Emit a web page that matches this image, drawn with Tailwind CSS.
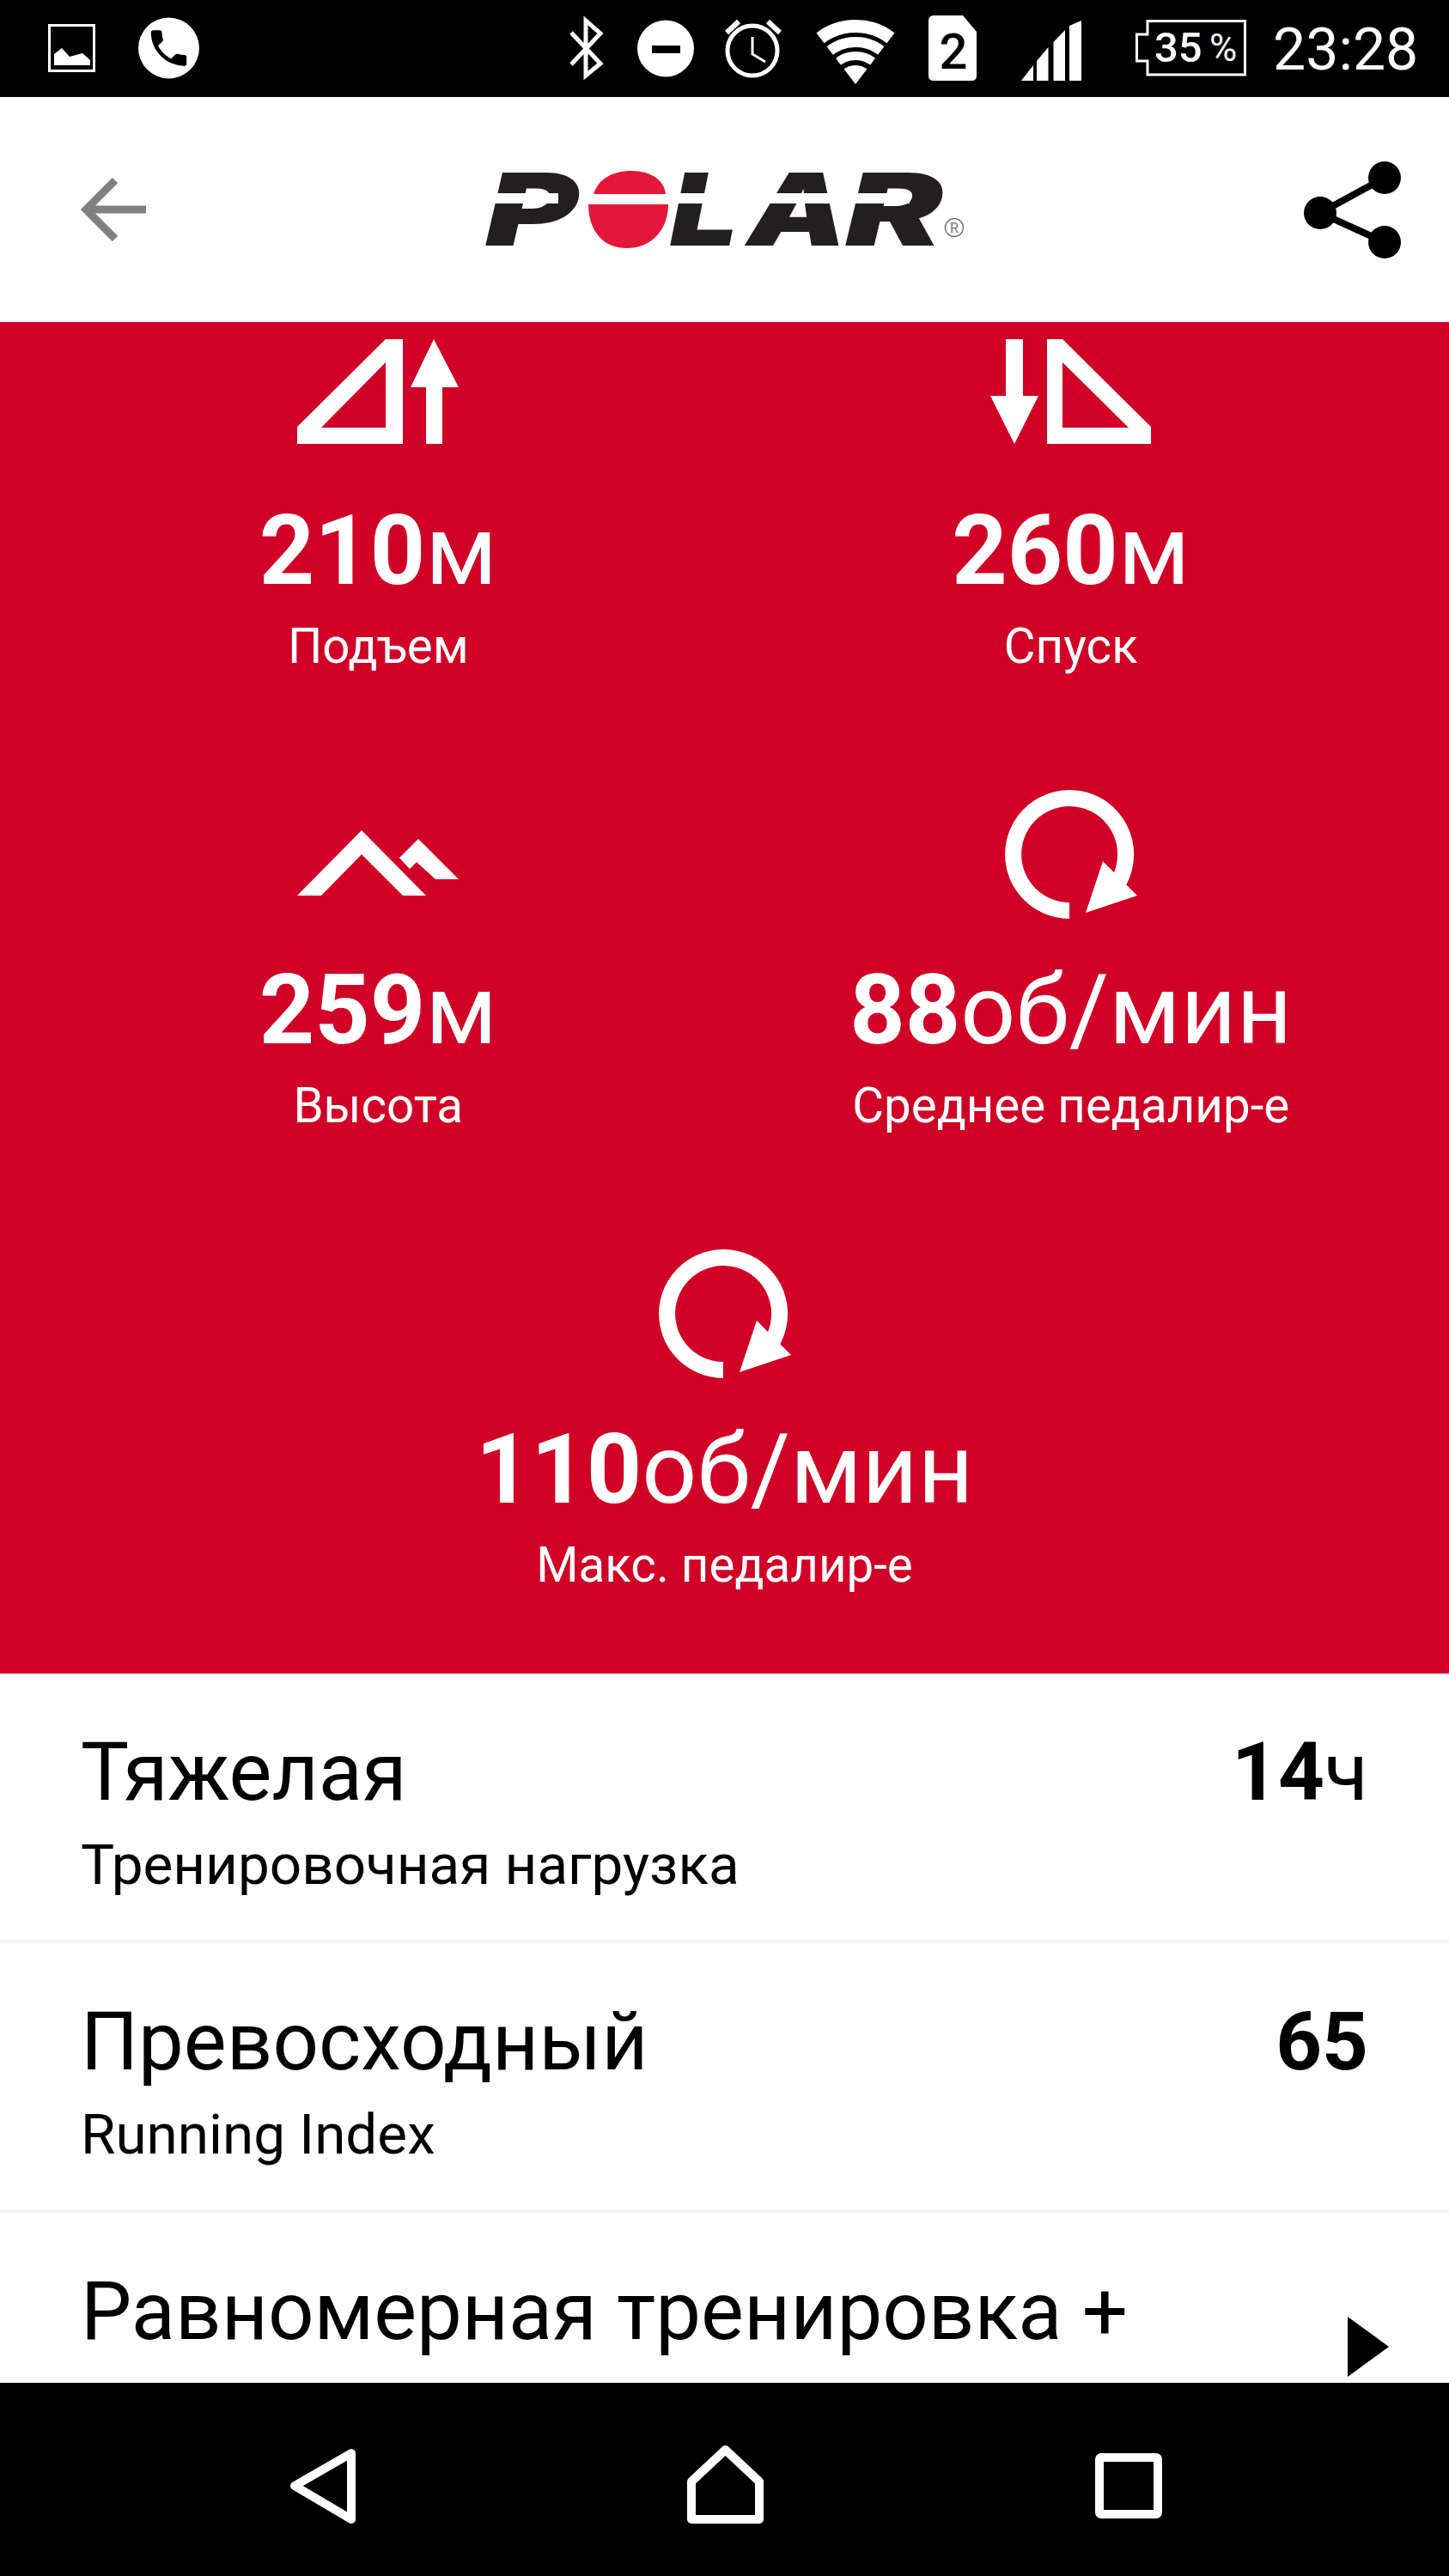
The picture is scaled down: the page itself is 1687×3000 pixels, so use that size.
<!DOCTYPE html>
<html lang="ru">
<head>
    <meta charset="UTF-8">
    <meta name="viewport" content="width=device-width, initial-scale=1.0">
    <title>Polar</title>
    <script src="https://cdn.jsdelivr.net/npm/@tailwindcss/browser@4"></script>
</head>
<body class="bg-white font-[Roboto,sans-serif]">
<div class="flex flex-col h-[3000px] w-[1687px] overflow-hidden">

    <!-- status bar: every icon is 112 tall so y values are real screen y -->
    <div class="flex h-[113px] shrink-0 bg-black text-white">
        <svg class="ml-[56px] w-[55px] h-[112px]" viewBox="0 0 55 112">
            <rect x="1.5" y="29.5" width="52" height="53" fill="none" stroke="#fff" stroke-width="3"/>
            <path d="M7 76V63L16 56L25 66L40 62L49 70V76Z" fill="#fff"/>
        </svg>
        <svg class="ml-[50px] w-[71px] h-[112px]" viewBox="0 0 71 112">
            <circle cx="35.5" cy="56" r="35.5" fill="#fff"/>
            <path transform="translate(35.5 56) scale(2.3) translate(-12 -12)" d="M6.62 10.79c1.44 2.83 3.76 5.14 6.59 6.59l2.2-2.2c.27-.27.67-.36 1.02-.24 1.12.37 2.33.57 3.57.57.55 0 1 .45 1 1V20c0 .55-.45 1-1 1-9.39 0-17-7.61-17-17 0-.55.45-1 1-1h3.5c.55 0 1 .45 1 1 0 1.25.2 2.45.57 3.57.11.35.03.74-.25 1.02l-2.2 2.2z" fill="#000"/>
        </svg>
        <svg class="ml-[430px] w-[41px] h-[112px]" viewBox="0 0 41 112">
            <path d="M3 38L37 74L20 88V24L37 39L3 75" fill="none" stroke="#fff" stroke-width="5"/>
        </svg>
        <svg class="ml-[39px] w-[66px] h-[112px]" viewBox="0 0 66 112">
            <circle cx="33" cy="56.5" r="33" fill="#fff"/>
            <rect x="17" y="53" width="33" height="9" fill="#000"/>
        </svg>
        <svg class="ml-[36px] w-[66px] h-[112px]" viewBox="0 0 66 112">
            <circle cx="32" cy="59" r="29" fill="none" stroke="#fff" stroke-width="5"/>
            <path d="M2 38L16 25M50 25L64 38" fill="none" stroke="#fff" stroke-width="6"/>
            <path d="M32 43V63L47 72" fill="none" stroke="#fff" stroke-width="3"/>
        </svg>
        <svg class="ml-[40px] w-[92px] h-[112px]" viewBox="0 0 92 112">
            <defs><clipPath id="wifi-fan"><polygon points="46,98 -6,30 -6,0 98,0 98,30"/></clipPath></defs>
            <g clip-path="url(#wifi-fan)" fill="none" stroke="#fff">
                <circle cx="46" cy="98" r="67.5" stroke-width="15"/>
                <circle cx="46" cy="98" r="49" stroke-width="12"/>
                <circle cx="46" cy="98" r="33" stroke-width="10"/>
                <circle cx="46" cy="98" r="11" stroke-width="22"/>
            </g>
        </svg>
        <svg class="ml-[39px] w-[56px] h-[112px]" viewBox="0 0 56 112">
            <path d="M6 18H40L56 37V88Q56 94 50 94H6Q0 94 0 88V24Q0 18 6 18Z" fill="#fff"/>
            <text x="29" y="80" text-anchor="middle" font-size="58" font-weight="500" fill="#000">2</text>
        </svg>
        <svg class="ml-[52px] w-[70px] h-[112px]" viewBox="0 0 70 112">
            <path d="M0 94L14 76V94ZM18 71L31.5 55V94H18ZM37.5 49L51 35V94H37.5ZM56 30L70 24V94H56Z" fill="#fff"/>
        </svg>
        <svg class="ml-[63px] w-[129px] h-[112px]" viewBox="0 0 129 112">
            <path d="M14 24.5H127.5V87H14V71H1.5V40H14Z" fill="none" stroke="#fff" stroke-width="3"/>
            <text x="22" y="72" font-size="49" font-weight="500" fill="#fff">35</text>
            <text x="86" y="71" font-size="44" fill="#fff">%</text>
        </svg>
        <div class="ml-[31px] pt-[2px] text-[68px] leading-[112px]">23:28</div>
    </div>

    <!-- header -->
    <div class="flex items-center h-[262px] shrink-0 bg-white">
        <svg class="ml-[94px] w-[76px] h-[74px]" viewBox="0 0 76 74">
            <path d="M40 3L6 37L40 71M6 37H76" fill="none" stroke="#808080" stroke-width="9"/>
        </svg>
        <div class="relative ml-[395px] flex items-center w-[560px] h-[92px] font-[Inter,sans-serif] font-black italic text-[117px] leading-[92px] text-[#231f20]">
            <span class="w-[120px] origin-left scale-x-[1.4]">P</span>
            <svg class="w-[93px] h-[90px]" viewBox="0 0 93 90">
                <path d="M6 27C12 8 30 0 50 0C72 0 88 10 90 27Z" fill="#e4173a"/>
                <path d="M0 39H93C93 68 74 90 44 90C16 90 0 68 0 39Z" fill="#e4173a"/>
            </svg>
            <span class="ml-[2px] w-[90px] origin-left scale-x-[1.2]">L</span>
            <span class="w-[114px] origin-left scale-x-[1.25]">A</span>
            <span class="w-[113px] origin-left scale-x-[1.45]">R</span>
            <svg class="ml-[2px] mt-[42px] w-[24px] h-[24px] shrink-0" viewBox="0 0 24 24">
                <circle cx="12" cy="12" r="10.5" fill="none" stroke="#777" stroke-width="1.5"/>
                <text x="12" y="18" text-anchor="middle" font-size="16" font-style="normal" font-weight="400" font-family="Roboto" fill="#777">R</text>
            </svg>
            <!-- the white slit that runs through the wordmark -->
            <div class="absolute left-[-5px] top-[27px] w-[90px] h-[12px] bg-white"></div>
            <div class="absolute left-[214px] top-[27px] w-[197px] h-[12px] bg-white"></div>
            <div class="absolute left-[416px] top-[27px] w-[78px] h-[12px] bg-white"></div>
        </div>
        <svg class="ml-auto mr-[56px] w-[113px] h-[113px]" viewBox="0 0 113 113">
            <path d="M94 19L19 60L94 94" fill="none" stroke="#000" stroke-width="8"/>
            <circle cx="94" cy="19" r="19"/>
            <circle cx="19" cy="60" r="19"/>
            <circle cx="94" cy="94" r="19"/>
        </svg>
    </div>

    <div class="flex-1 overflow-hidden">
        <!-- red stats block -->
        <div class="grid grid-cols-2 gap-y-[139px] px-[37px] pt-[10px] pb-[98px] bg-[#d00027] text-white text-center">
            <div class="flex flex-col items-center">
                <svg class="w-[188px] h-[150px]" viewBox="0 0 188 150" fill="#fff" fill-rule="evenodd">
                    <path d="M0 132V112L103 10H123V132ZM28 113H103V37Z"/>
                    <path d="M159 10L188 66H169V132H150V66H132Z"/>
                </svg>
                <div class="mt-[51px] text-[112.5px] leading-[112px]"><b class="font-bold">210</b>м</div>
                <div class="mt-[27px] text-[56.5px] leading-[56px]">Подъем</div>
            </div>
            <div class="flex flex-col items-center">
                <svg class="w-[188px] h-[150px]" viewBox="0 0 188 150" fill="#fff" fill-rule="evenodd">
                    <path d="M66 10H84L187 112V132H66ZM84 37V113H161Z"/>
                    <path d="M18 10H38V76H56L28 132L0 76H18Z"/>
                </svg>
                <div class="mt-[51px] text-[112.5px] leading-[112px]"><b class="font-bold">260</b>м</div>
                <div class="mt-[27px] text-[56.5px] leading-[56px]">Спуск</div>
            </div>
            <div class="flex flex-col items-center">
                <svg class="w-[188px] h-[150px]" viewBox="0 0 188 150" fill="#fff">
                    <path d="M75 47L150 123H123L75 75L28 123H0Z"/>
                    <path d="M141 57L188 104H161L139 84L131 92L119 79Z"/>
                </svg>
                <div class="mt-[51px] text-[112.5px] leading-[112px]"><b class="font-bold">259</b>м</div>
                <div class="mt-[27px] text-[56.5px] leading-[56px]">Высота</div>
            </div>
            <div class="flex flex-col items-center">
                <svg class="w-[154px] h-[150px]" viewBox="0 0 154 150">
                    <path d="M75 140.5A65.5 65.5 0 1 1 127 115" fill="none" stroke="#fff" stroke-width="19"/>
                    <path d="M114 83L154 123L94 143Z" fill="#fff"/>
                </svg>
                <div class="mt-[51px] text-[112.5px] leading-[112px]"><b class="font-bold">88</b>об/мин</div>
                <div class="mt-[27px] text-[56.5px] leading-[56px]">Среднее педалир-е</div>
            </div>
            <div class="col-span-2 flex flex-col items-center">
                <svg class="w-[154px] h-[150px]" viewBox="0 0 154 150">
                    <path d="M75 140.5A65.5 65.5 0 1 1 127 115" fill="none" stroke="#fff" stroke-width="19"/>
                    <path d="M114 83L154 123L94 143Z" fill="#fff"/>
                </svg>
                <div class="mt-[51px] text-[112.5px] leading-[112px]"><b class="font-bold">110</b>об/мин</div>
                <div class="mt-[27px] text-[56.5px] leading-[56px]">Макс. педалир-е</div>
            </div>
        </div>

        <!-- training rows -->
        <div class="flex justify-between h-[314px] pl-[94px] pr-[94px] pt-[68px] border-b-[4px] border-[#f2f2f2] text-black">
            <div>
                <div class="text-[94px] leading-[94px]">Тяжелая</div>
                <div class="mt-[28px] text-[65.6px] leading-[66px]">Тренировочная нагрузка</div>
            </div>
            <div class="text-[94px] leading-[94px]"><b class="font-bold">14</b>ч</div>
        </div>
        <div class="flex justify-between h-[314px] pl-[94px] pr-[94px] pt-[68px] border-b-[4px] border-[#f2f2f2] text-black">
            <div>
                <div class="text-[94px] leading-[94px]">Превосходный</div>
                <div class="mt-[28px] text-[65.6px] leading-[66px]">Running Index</div>
            </div>
            <div class="text-[94px] leading-[94px] font-bold">65</div>
        </div>
        <div class="flex justify-between pl-[94px] pr-[70px] pt-[68px] text-black">
            <div class="text-[94px] leading-[94px]">Равномерная тренировка +</div>
            <svg class="mt-[53px] w-[48px] h-[70px]" viewBox="0 0 48 70"><path d="M0 0L48 35L0 70Z" fill="#000"/></svg>
        </div>
    </div>

    <!-- nav bar -->
    <div class="flex h-[225px] shrink-0 bg-black">
        <svg class="ml-[337px] w-[77px] h-[225px]" viewBox="0 0 77 225">
            <path d="M72 82V159L6 120Z" fill="none" stroke="#fff" stroke-width="10" stroke-linejoin="round"/>
        </svg>
        <svg class="ml-[386px] w-[89px] h-[225px]" viewBox="0 0 89 225">
            <path d="M5 159V115L44.5 78L84 115V159Z" fill="none" stroke="#fff" stroke-width="10" stroke-linejoin="round"/>
        </svg>
        <svg class="ml-[386px] w-[78px] h-[225px]" viewBox="0 0 78 225">
            <rect x="5" y="87" width="68" height="66" rx="2" fill="none" stroke="#fff" stroke-width="10"/>
        </svg>
    </div>
</div>
</body>
</html>
